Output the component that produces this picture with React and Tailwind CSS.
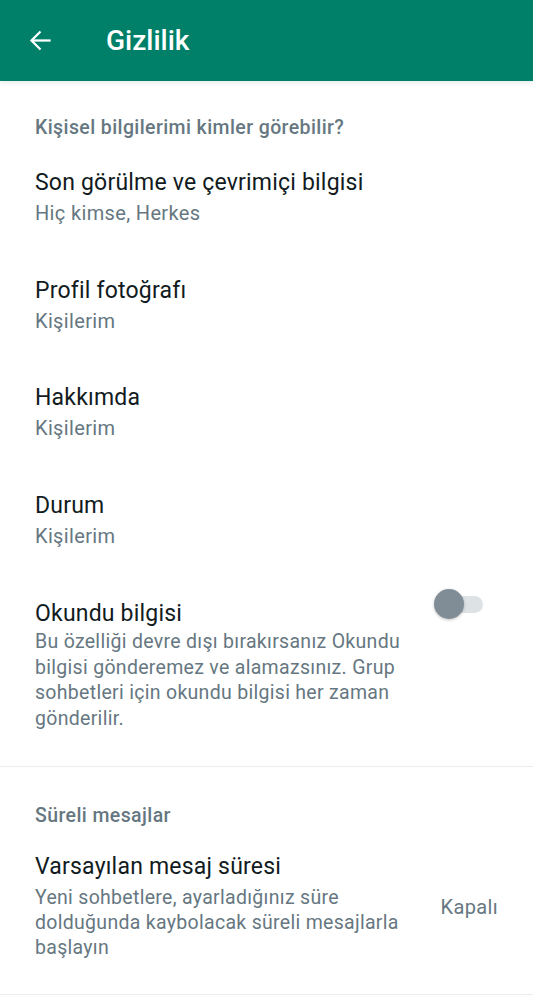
export default function App() {
  const font = { fontFamily: 'Roboto, "Noto Sans", sans-serif' };
  const Item = ({ title, sub }) => (
    <div className="pl-[35px] pr-[35px] pt-[24px] pb-[23.5px]">
      <div className="text-[23px] leading-[30px] tracking-[0.2px] text-[#111b21]">{title}</div>
      <div className="text-[20px] leading-[30px] tracking-[0.35px] text-[#667781]">{sub}</div>
    </div>
  );
  return (
    <div className="w-[533px] min-h-[1000px] bg-white" style={font}>
      <div className="h-[81px] bg-[#008069] flex items-center relative z-10 shadow-[0_2px_4px_rgba(0,0,0,0.08)]">
        <div className="w-[106px] pl-[27px] flex items-center">
          <svg width="27" height="27" viewBox="0 0 24 24" fill="none" stroke="white" strokeWidth="2" strokeLinecap="butt">
            <path d="M21 12H4" />
            <path d="M12 4l-8 8 8 8" />
          </svg>
        </div>
        <div className="text-white text-[28px] font-medium leading-none">Gizlilik</div>
      </div>
      <div className="pl-[35px] pt-[35px] pb-[4px] text-[19.5px] leading-[24px] tracking-[0.4px] font-medium text-[#667781]">
        Kişisel bilgilerimi kimler görebilir?
      </div>
      <Item title="Son görülme ve çevrimiçi bilgisi" sub="Hiç kimse, Herkes" />
      <Item title="Profil fotoğrafı" sub="Kişilerim" />
      <Item title="Hakkımda" sub="Kişilerim" />
      <Item title="Durum" sub="Kişilerim" />
      <div className="pl-[35px] pr-[50px] pt-[25px] pb-[35px] flex">
        <div className="w-[372px]">
          <div className="text-[23px] leading-[30px] tracking-[0.2px] text-[#111b21]">Okundu bilgisi</div>
          <div className="text-[19.5px] leading-[25.5px] tracking-[0.3px] text-[#667781] whitespace-nowrap">
            Bu özelliği devre dışı bırakırsanız Okundu<br />
            bilgisi gönderemez ve alamazsınız. Grup<br />
            sohbetleri için okundu bilgisi her zaman<br />
            gönderilir.
          </div>
        </div>
        <div className="flex-1 flex justify-end">
          <div className="relative w-[49px] h-[30px] mt-[-10px]">
            <div className="absolute left-[7px] top-[7px] w-[42px] h-[17px] rounded-full bg-[#dde2e5]" />
            <div className="absolute left-0 top-0 w-[30px] h-[30px] rounded-full bg-[#808d97] shadow-[0_1px_3px_rgba(0,0,0,0.25)]" />
          </div>
        </div>
      </div>
      <div className="h-px bg-[#ececec]" />
      <div className="pl-[35px] pt-[37px] pb-[24px] text-[19.5px] leading-[24px] tracking-[0.4px] font-medium text-[#667781]">
        Süreli mesajlar
      </div>
      <div className="pl-[35px] pr-[35px] pb-[34px] flex items-center">
        <div className="w-[372px]">
          <div className="text-[23px] leading-[30px] tracking-[0.2px] text-[#111b21]">Varsayılan mesaj süresi</div>
          <div className="mt-[3px] text-[19.5px] leading-[25px] tracking-[0.3px] text-[#667781] whitespace-nowrap">
            Yeni sohbetlere, ayarladığınız süre<br />
            dolduğunda kaybolacak süreli mesajlarla<br />
            başlayın
          </div>
        </div>
        <div className="flex-1 flex justify-end text-[20px] tracking-[0.35px] text-[#667781] pt-[2px]">Kapalı</div>
      </div>
      <div className="h-px bg-[#ececec]" />
    </div>
  );
}
